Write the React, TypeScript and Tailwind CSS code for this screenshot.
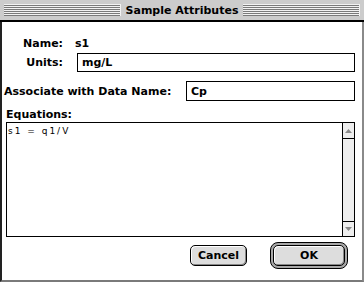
export default function App() {
  const stripes =
    "h-[12px] flex-1 bg-[image:repeating-linear-gradient(to_bottom,#f2f2f2_0px,#f2f2f2_1px,#7a7a7a_1px,#7a7a7a_2px)] border-r border-r-[#f2f2f2]";

  return (
    <div className="w-[364px] h-[282px] flex flex-col bg-white text-black font-['DejaVu_Sans',sans-serif] text-[11px] font-bold leading-[13px]">
      {/* Title bar */}
      <div className="h-[22px] bg-[#cccccc] border-b-2 border-black flex items-center px-[4px]">
        <div className={stripes} />
        <span className="px-[5px]">Sample Attributes</span>
        <div className={stripes} />
      </div>

      {/* Dialog body */}
      <div className="flex-1 flex flex-col border-l-2 border-l-[#222222] border-r-2 border-r-[#8a8a8a] border-b-2 border-b-[#7a7a7a] pt-[12px] pl-[4px] pr-[7px]">
        <div className="flex items-center h-[19px]">
          <span className="w-[57px] text-right">Name:</span>
          <span className="ml-[12px]">s1</span>
        </div>

        <div className="flex items-center h-[19px]">
          <span className="w-[57px] text-right">Units:</span>
          <div className="ml-[14px] flex-1 h-[19px] border border-black flex items-center px-[4px]">
            mg/L
          </div>
        </div>

        <div className="flex items-center h-[20px] mt-[9px]">
          <span className="-ml-[2px]">Associate with Data Name:</span>
          <div className="ml-auto w-[169px] h-[20px] border border-black flex items-center px-[4px]">
            Cp
          </div>
        </div>

        <div className="flex items-center h-[21px] pt-[6px]">Equations:</div>

        {/* Equations text area */}
        <div className="h-[115px] border border-black flex">
          <div className="flex-1 pl-[1px] pt-[3px] font-normal text-[9px] leading-[11px] tracking-[2px]">
            s1 = q1/V
          </div>
          <div className="w-[12px] border-l border-black bg-[#eeeeee] flex flex-col">
            <div className="h-[16px] border-b border-black flex items-center justify-center">
              <svg width="7" height="4" viewBox="0 0 7 4">
                <polygon points="3.5,0 7,4 0,4" fill="#8a8a8a" />
              </svg>
            </div>
            <div className="flex-1" />
            <div className="h-[15px] border-t border-black flex items-center justify-center">
              <svg width="7" height="4" viewBox="0 0 7 4">
                <polygon points="0,0 7,0 3.5,4" fill="#8a8a8a" />
              </svg>
            </div>
          </div>
        </div>

        {/* Buttons */}
        <div className="mt-[5px] flex justify-end items-center gap-[23px] pr-[7px]">
          <button className="w-[57px] h-[21px] rounded-[5px] border border-black bg-[#dddddd] shadow-[inset_1px_1px_0_#ffffff,inset_-1px_-1px_0_#888888] flex items-center justify-center">
            Cancel
          </button>
          <div className="w-[78px] h-[27px] rounded-[8px] border border-black bg-[#a8a8a8] p-[2px] flex">
            <button className="flex-1 rounded-[5px] border border-black bg-[#dddddd] shadow-[inset_1px_1px_0_#ffffff,inset_-1px_-1px_0_#888888] flex items-center justify-center">
              OK
            </button>
          </div>
        </div>
      </div>
    </div>
  );
}
